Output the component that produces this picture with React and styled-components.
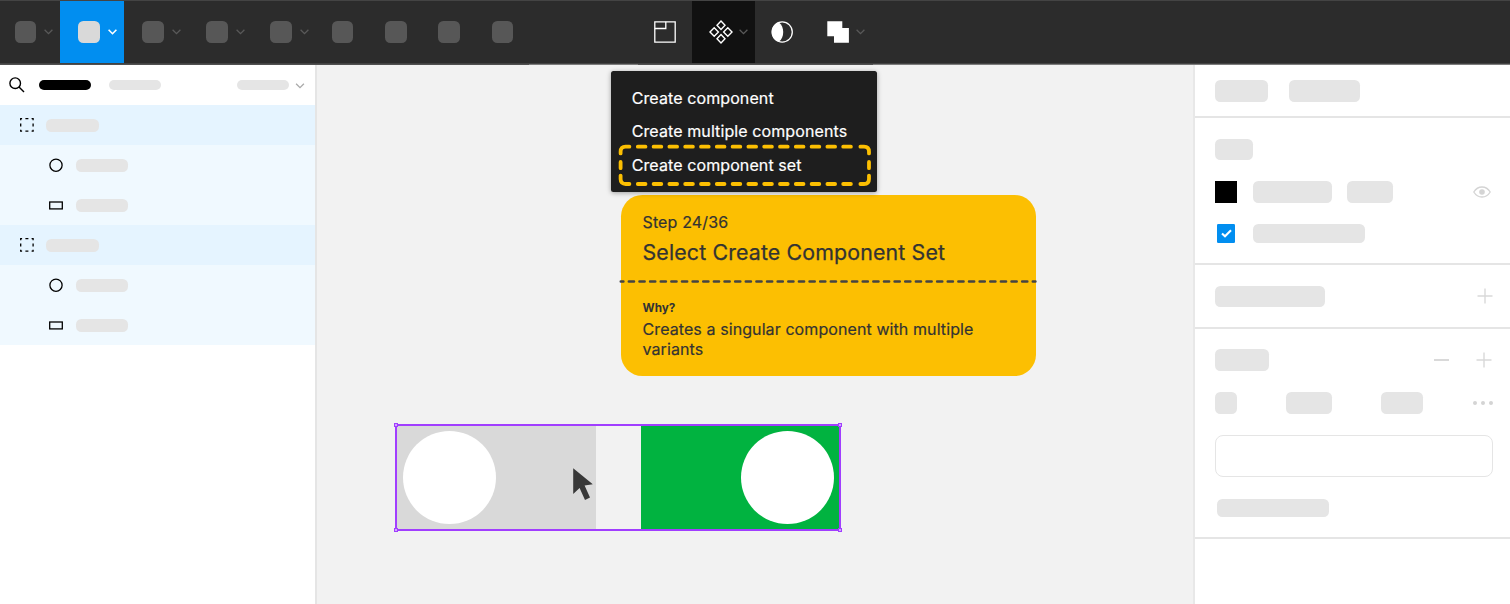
import React from 'react';
import styled, { createGlobalStyle } from 'styled-components';

const Global = createGlobalStyle`
  * { box-sizing: border-box; }
  body { margin: 0; background: #f2f2f2; font-family: Inter, "Liberation Sans", sans-serif; }
  svg { display: block; flex: none; }
`;

const Screen = styled.div`
  width: 1510px;
  height: 604px;
  display: flex;
  flex-direction: column;
  overflow: hidden;
`;

/* ---------- toolbar ---------- */
const Toolbar = styled.header`
  height: 64px;
  flex: none;
  display: flex;
  background: #2c2c2c;
  border-top: 1px solid #444;
  border-bottom: 1px solid #424242;
`;

const ToolbarEdge = styled.div`
  height: 1px;
  flex: none;
  background: linear-gradient(
    to right,
    #505050 529px,
    #7c7c7c 529px 638px,
    #505050 638px 873px,
    #7c7c7c 873px
  );
`;

const Tool = styled.div`
  width: ${(p) => p.$w}px;
  padding-left: ${(p) => p.$pad}px;
  height: 62px;
  flex: none;
  display: flex;
  align-items: center;
  gap: ${(p) => p.$gap ?? 8}px;
  background: ${(p) => p.$bg || 'transparent'};
`;

const ToolBlock = styled.div`
  width: 21.4px;
  height: 21.4px;
  flex: none;
  border-radius: 5.3px;
  background: ${(p) => (p.$active ? '#d9d9d9' : '#575757')};
`;

const Spacer = styled.div`
  width: ${(p) => p.$w}px;
  flex: none;
`;

const Chevron = ({ color = '#5a5a5a', width = 9, weight = 1.3 }) => (
  <svg width={width} height="6" viewBox="0 0 9 6" fill="none">
    <path d="M0.6 0.8L4.5 4.7L8.4 0.8" stroke={color} strokeWidth={weight} />
  </svg>
);

const FrameIcon = () => (
  <svg width="22" height="22" viewBox="0 0 22 22" fill="none" stroke="#fff" strokeWidth="1.3">
    <path d="M0.8 0.8H21.2V21.2H0.8Z" />
    <path d="M0.8 7.5H11.8V0.8" />
  </svg>
);

const ComponentIcon = () => (
  <svg width="24" height="24" viewBox="0 0 24 24" fill="none" stroke="#fff" strokeWidth="1.4">
    <path d="M12 1.1L16 5.3L12 9.5L8 5.3Z" />
    <path d="M12 14.5L16 18.7L12 22.9L8 18.7Z" />
    <path d="M5.2 7.8L9.4 12L5.2 16.2L1 12Z" />
    <path d="M18.8 7.8L23 12L18.8 16.2L14.6 12Z" />
  </svg>
);

const MaskIcon = () => (
  <svg width="22" height="22" viewBox="0 0 22 22">
    <circle cx="11.2" cy="11" r="10.1" fill="none" stroke="#fff" strokeWidth="1.3" />
    <path d="M7.8 1.2C10.8 3.4 12.2 7 12.2 11S10.8 18.6 7.8 20.8C3.6 19.6 0.8 15.6 0.8 11S3.6 2.4 7.8 1.2Z" fill="#fff" />
  </svg>
);

const UnionIcon = () => (
  <svg width="22" height="22" viewBox="0 0 22 22">
    <path d="M0.3 0.3H15.3V7H21.9V21.7H7V15.3H0.3Z" fill="#fff" />
  </svg>
);

/* ---------- panels ---------- */
const Main = styled.main`
  flex: 1;
  min-height: 0;
  display: flex;
`;

const LeftPanel = styled.aside`
  width: 317px;
  flex: none;
  background: #fff;
  border-right: 2px solid #e5e5e5;
`;

const PanelHead = styled.div`
  height: 40px;
  display: flex;
  align-items: center;
  padding-left: 9px;
`;

const Pill = styled.div`
  width: ${(p) => p.$w}px;
  height: ${(p) => p.$h || 21.4}px;
  margin-left: ${(p) => p.$ml || 0}px;
  flex: none;
  border-radius: ${(p) => p.$r || 5.3}px;
  background: ${(p) => p.$color || '#e5e5e5'};
`;

const ChevronSlot = styled.div`
  margin: 1px 0 0 6px;
`;

const LayerRow = styled.div`
  height: 40px;
  display: flex;
  align-items: center;
  gap: ${(p) => (p.$child ? 12.6 : 12.4)}px;
  padding-left: ${(p) => (p.$child ? 49 : 20)}px;
  padding-top: 0.6px;
  background: ${(p) => (p.$child ? '#f0f9ff' : '#e5f4ff')};
`;

const SearchIcon = () => (
  <svg width="16" height="16" viewBox="0 0 16 16" fill="none" stroke="#000" strokeWidth="1.4">
    <circle cx="6.2" cy="6.2" r="5.3" />
    <path d="M10 10L15 15" />
  </svg>
);

const GroupIcon = () => (
  <svg width="14" height="14" viewBox="0 0 14 14" fill="none" stroke="#000" strokeWidth="1.3">
    <path d="M0.7 2.3V0.7H2.1M5.4 0.7H8.4M11.6 0.7H13.1V2.3M13.1 5.4V8.4M13.1 11.7V13.2H11.6M8.4 13.2H5.4M2.1 13.2H0.7V11.7M0.7 8.4V5.4" />
  </svg>
);

const EllipseIcon = () => (
  <svg width="14" height="14" viewBox="0 0 14 14" fill="none">
    <circle cx="7" cy="7.2" r="6.1" stroke="#000" strokeWidth="1.3" />
  </svg>
);

const RectIcon = () => (
  <svg width="14" height="9" viewBox="0 0 14 9" fill="none">
    <rect x="0.7" y="1" width="12.6" height="6.9" stroke="#000" strokeWidth="1.3" />
  </svg>
);

const layers = ['group', 'ellipse', 'rect', 'group', 'ellipse', 'rect'];
const layerIcons = { group: GroupIcon, ellipse: EllipseIcon, rect: RectIcon };

/* ---------- canvas ---------- */
const Canvas = styled.section`
  position: relative;
  width: 876px;
  flex: none;
  background: #f2f2f2;
`;

const Menu = styled.div`
  position: absolute;
  left: 293.5px;
  top: 5.6px;
  width: 266.5px;
  height: 121.2px;
  padding: 11.4px 21.6px 0 21.2px;
  border-radius: 2.5px;
  background: #1e1e1e;
  box-shadow: 0 1px 5px rgba(0, 0, 0, 0.35);
`;

const MenuItem = styled.div`
  height: 33.4px;
  line-height: 33.4px;
  font-size: 16px;
  letter-spacing: 0.1px;
  -webkit-text-stroke: 0.2px currentColor;
  color: #fff;
  white-space: nowrap;
`;

const Highlight = styled.svg`
  position: absolute;
  left: 7.6px;
  top: 73.4px;
`;

const Card = styled.div`
  position: absolute;
  left: 304px;
  top: 129.7px;
  width: 414.6px;
  height: 181.3px;
  padding: 17px 21.5px 0;
  border-radius: 21.3px;
  background: #fcbf02;
  color: #333;
`;

const Step = styled.div`
  font-size: 16px;
  line-height: 21px;
  letter-spacing: 0.14px;
  -webkit-text-stroke: 0.2px currentColor;
`;

const Title = styled.div`
  margin-top: 5px;
  font-size: 21.33px;
  line-height: 29px;
  letter-spacing: 0.15px;
  -webkit-text-stroke: 0.25px currentColor;
`;

const Divider = styled.svg`
  margin: 13px 0 0 -23.5px;
`;

const Why = styled.div`
  margin-top: 17px;
  font-size: 11.7px;
  font-weight: 700;
  line-height: 16px;
`;

const Body = styled.div`
  margin-top: 3px;
  font-size: 16px;
  line-height: 20px;
  letter-spacing: 0.09px;
  -webkit-text-stroke: 0.2px currentColor;
`;

const Selection = styled.div`
  position: absolute;
  left: 78px;
  top: 359px;
  width: 446px;
  height: 107px;
  display: flex;
  justify-content: space-between;
  border: 2px solid #a13eff;
`;

const Toggle = styled.div`
  width: ${(p) => (p.$on ? 198 : 199)}px;
  display: flex;
  align-items: center;
  justify-content: ${(p) => (p.$on ? 'flex-end' : 'flex-start')};
  padding: 0 ${(p) => (p.$on ? 5 : 5.6)}px;
  background: ${(p) => (p.$on ? '#01b340' : '#d9d9d9')};
`;

const Knob = styled.div`
  width: 93.5px;
  height: 93.5px;
  border-radius: 50%;
  background: #fff;
`;

const Handle = styled.i`
  position: absolute;
  width: 4px;
  height: 4px;
  border: 1px solid #a13eff;
  background: #d3a6ff;
  ${(p) => p.$x}: -3px;
  ${(p) => p.$y}: -3px;
`;

const Cursor = styled.svg`
  position: absolute;
  left: 256px;
  top: 402px;
`;

const HighlightFrame = () => (
  <Highlight width="254" height="44" viewBox="0 0 254 44" fill="none" stroke="#fcbf02" strokeWidth="3.8" strokeLinecap="round">
    <path d="M2.6 9.4V7.7Q2.6 2.7 7.6 2.7H11.4" />
    <path d="M242.4 2.7H246Q251 2.7 251 7.7V9.4" />
    <path d="M251 31.6V35Q251 40 246 40H242.4" />
    <path d="M11.4 40H7.6Q2.6 40 2.6 35V31.6" />
    <path d="M2.6 18V24.2M251 18V24.2" />
    <path d="M19.8 2.7H235" strokeDasharray="7.7 8.1" />
    <path d="M19.8 40H235" strokeDasharray="7.7 8.1" />
  </Highlight>
);

/* ---------- inspector ---------- */
const RightPanel = styled.aside`
  flex: 1;
  background: #fff;
  border-left: 2px solid #e8e8e8;
`;

const Section = styled.div`
  height: ${(p) => p.$h}px;
  padding: ${(p) => p.$top}px 17px 0 20.4px;
  border-bottom: 2px solid #e5e5e5;
`;

const Row = styled.div`
  height: ${(p) => p.$h || 21.4}px;
  margin-top: ${(p) => p.$mt || 0}px;
  margin-left: ${(p) => p.$ml || 0}px;
  display: flex;
  align-items: center;
`;

const End = styled.div`
  margin-left: auto;
  margin-right: ${(p) => p.$mr || 0}px;
  display: flex;
  align-items: center;
  gap: 27px;
`;

const Swatch = styled.div`
  width: 22px;
  height: 22px;
  flex: none;
  background: #000;
`;

const Checkbox = styled.div`
  width: 18.7px;
  height: 18.7px;
  flex: none;
  display: flex;
  align-items: center;
  justify-content: center;
  border-radius: 1.3px;
  background: #018ef0;
`;

const Field = styled.div`
  width: 277.3px;
  height: 42px;
  margin-top: 21.4px;
  border: 1.4px solid #e5e5e5;
  border-radius: 8px;
`;

const EyeIcon = () => (
  <svg width="18" height="12" viewBox="0 0 18 12">
    <path d="M0.8 6C2.8 2.7 5.7 1 9 1S15.2 2.7 17.2 6C15.2 9.3 12.3 11 9 11S2.8 9.3 0.8 6Z" fill="none" stroke="#d4d4d4" strokeWidth="1.3" />
    <circle cx="9" cy="6" r="2.8" fill="#d4d4d4" />
  </svg>
);

const PlusIcon = () => (
  <svg width="16" height="16" viewBox="0 0 16 16" stroke="#d9d9d9" strokeWidth="1.4">
    <path d="M0.5 8H15.5M8 0.5V15.5" />
  </svg>
);

const MinusIcon = () => (
  <svg width="15" height="2" viewBox="0 0 15 2">
    <rect width="15" height="2" fill="#d9d9d9" />
  </svg>
);

const DotsIcon = () => (
  <svg width="20" height="4" viewBox="0 0 20 4" fill="#d4d4d4">
    <circle cx="2" cy="2" r="2" />
    <circle cx="10" cy="2" r="2" />
    <circle cx="18" cy="2" r="2" />
  </svg>
);

export default function App() {
  return (
    <Screen>
      <Global />
      <Toolbar>
        <Tool $w={60} $pad={14.6}><ToolBlock /><Chevron /></Tool>
        <Tool $w={64} $pad={18.4} $gap={7.8} $bg="#018ef0"><ToolBlock $active /><Chevron color="#fff" weight={1.6} /></Tool>
        {[0, 1, 2].map((i) => (
          <Tool key={i} $w={64} $pad={18.4} $gap={7.8}><ToolBlock /><Chevron /></Tool>
        ))}
        {[0, 1, 2, 3].map((i) => (
          <Tool key={i} $w={53.33} $pad={15.8}><ToolBlock /></Tool>
        ))}
        <Spacer $w={108.67} />
        <Tool $w={54} $pad={16}><FrameIcon /></Tool>
        <Tool $w={63} $pad={17} $gap={6.2} $bg="#111"><ComponentIcon /><Chevron /></Tool>
        <Tool $w={56} $pad={16.5}><MaskIcon /></Tool>
        <Tool $w={64} $pad={16} $gap={7.4}><UnionIcon /><Chevron /></Tool>
      </Toolbar>
      <ToolbarEdge />
      <Main>
        <LeftPanel>
          <PanelHead>
            <SearchIcon />
            <Pill $w={52.4} $h={10.7} $r={5.4} $ml={13.5} $color="#000" />
            <Pill $w={52.4} $h={10.7} $r={5.4} $ml={18.2} />
            <Pill $w={52.4} $h={10.7} $r={5.4} $ml={75.5} />
            <ChevronSlot><Chevron color="#aaa" width={10} /></ChevronSlot>
          </PanelHead>
          {layers.map((kind, i) => {
            const Icon = layerIcons[kind];
            return (
              <LayerRow key={i} $child={kind !== 'group'}>
                <Icon />
                <Pill $w={52.4} $h={13.4} />
              </LayerRow>
            );
          })}
        </LeftPanel>
        <Canvas>
          <Card>
            <Step>Step 24/36</Step>
            <Title>Select Create Component Set</Title>
            <Divider width="418" height="3" viewBox="0 0 418 3">
              <path d="M1.8 1.5H416.4" fill="none" stroke="#444" strokeWidth="2.6" strokeLinecap="round" strokeDasharray="5.1 5.53" strokeDashoffset="2.55" />
            </Divider>
            <Why>Why?</Why>
            <Body>Creates a singular component with multiple variants</Body>
          </Card>
          <Menu>
            <MenuItem>Create component</MenuItem>
            <MenuItem>Create multiple components</MenuItem>
            <MenuItem>Create component set</MenuItem>
            <HighlightFrame />
          </Menu>
          <Selection>
            <Toggle><Knob /></Toggle>
            <Toggle $on><Knob /></Toggle>
            <Handle $x="left" $y="top" />
            <Handle $x="right" $y="top" />
            <Handle $x="left" $y="bottom" />
            <Handle $x="right" $y="bottom" />
          </Selection>
          <Cursor width="21" height="34" viewBox="0 0 21 34">
            <path d="M0.2 1.2L19.8 17.2L11.6 18.6L17 30.6L12 33L6.6 21L0.2 27Z" fill="#383838" />
          </Cursor>
        </Canvas>
        <RightPanel>
          <Section $h={53} $top={15.2}>
            <Row><Pill $w={52.4} /><Pill $w={71} $ml={20.8} /></Row>
          </Section>
          <Section $h={147} $top={20.6}>
            <Row><Pill $w={37.6} /></Row>
            <Row $mt={21.2}>
              <Swatch />
              <Pill $w={78.8} $ml={15.5} />
              <Pill $w={45.6} $ml={15.6} />
              <End $mr={2}><EyeIcon /></End>
            </Row>
            <Row $mt={21.4} $ml={1.4} $h={18.7}>
              <Checkbox>
                <svg width="11" height="9" viewBox="0 0 11 9" fill="none">
                  <path d="M1 4.4L4 7.2L10 1.2" stroke="#fff" strokeWidth="2.1" />
                </svg>
              </Checkbox>
              <Pill $w={112} $h={18.7} $ml={17.4} />
            </Row>
          </Section>
          <Section $h={64} $top={20.5}>
            <Row><Pill $w={109.6} /><End><PlusIcon /></End></Row>
          </Section>
          <Section $h={210} $top={20.4}>
            <Row><Pill $w={53.6} /><End $mr={1}><MinusIcon /><PlusIcon /></End></Row>
            <Row $mt={21.4}>
              <Pill $w={21.6} />
              <Pill $w={45.6} $ml={49} />
              <Pill $w={42.8} $ml={49} />
              <End $mr={0.4}><DotsIcon /></End>
            </Row>
            <Field />
            <Row $mt={21.6} $ml={1.4} $h={18.7}><Pill $w={112} $h={18.7} /></Row>
          </Section>
        </RightPanel>
      </Main>
    </Screen>
  );
}
